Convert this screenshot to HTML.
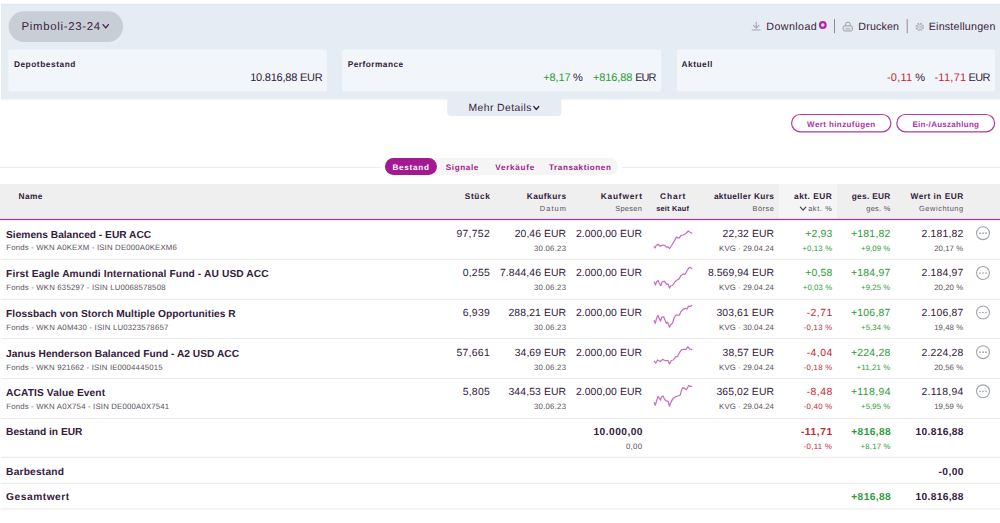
<!DOCTYPE html>
<html lang="de"><head><meta charset="utf-8"><title>Depot</title>
<style>
*{box-sizing:border-box;margin:0;padding:0}
html,body{width:1000px;height:523px;overflow:hidden;background:#fff}
body{font-family:"Liberation Sans",sans-serif;color:#33203c;position:relative}
.abs{position:absolute}
.t{position:absolute;white-space:pre;line-height:1.117;text-rendering:geometricPrecision}
#tabline{left:0;top:167px;width:1000px;height:1px;background:#ededed}
#tabs{left:381px;top:158px;width:241px;height:17px;background:#fff}
#tabs i{position:absolute;left:4px;top:0;width:233px;height:17px;background:#f5f5f5;border-radius:9px}
#tabs b{position:absolute;left:4px;top:0;width:52px;height:17px;background:#a3198f;border-radius:9px}
#thead{left:0;top:184px;width:1000px;height:35px;background:#efefef}
#sorted{left:779px;top:184px;width:58px;height:35px;background:#f5f5f5}
svg{position:absolute;overflow:visible}
</style></head><body>
<svg width="1000" height="523" style="left:0;top:0" viewBox="0 0 1000 523">
<rect x="1" y="3.9" width="999" height="95.6" fill="#e6ecf3"/><rect x="1" y="3.9" width="999" height="0.5" fill="#dde3e9"/><rect x="1" y="99.5" width="999" height="1" fill="#f6f8fa"/>
<path d="M447.3 99 H561.3 V112.3 Q561.3 115.9 557.7 115.9 H450.9 Q447.3 115.9 447.3 112.3 Z" fill="#e6ecf3"/>
<rect x="8.6" y="11.3" width="114.5" height="30.6" rx="15.3" fill="#c8ced6"/>
<rect x="8.3" y="49.5" width="318.6" height="42" rx="2" fill="#f2f6fa"/>
<rect x="342.1" y="49.5" width="319.2" height="42" rx="2" fill="#f2f6fa"/>
<rect x="676.9" y="49.5" width="318.2" height="42" rx="2" fill="#f2f6fa"/>
<rect x="834" y="19" width="1" height="14.2" fill="#8f8c96"/>
<rect x="906.7" y="19" width="1" height="14.2" fill="#8f8c96"/>
</svg>
<div id="tabline" class="abs"></div>
<div id="tabs" class="abs"><i></i><b></b></div>
<div id="thead" class="abs"></div>
<div id="sorted" class="abs"></div>
<svg width="1000" height="523" style="left:0;top:0" viewBox="0 0 1000 523"><rect x="0" y="218.9" width="1000" height="1.2" fill="#b52fa4"/><rect x="1" y="258.8" width="999" height="1" fill="#e9e9e9"/><rect x="1" y="298.8" width="999" height="1" fill="#e9e9e9"/><rect x="1" y="338.0" width="999" height="1" fill="#e9e9e9"/><rect x="1" y="378.0" width="999" height="1" fill="#e9e9e9"/><rect x="1" y="418.0" width="999" height="1" fill="#e9e9e9"/><rect x="1" y="456.8" width="999" height="1" fill="#e9e9e9"/><rect x="1" y="482.8" width="999" height="1" fill="#e9e9e9"/><rect x="1" y="508.5" width="999" height="1" fill="#e9e9e9"/></svg>
<svg width="1000" height="523" style="left:0;top:0" viewBox="0 0 1000 523"><rect x="791.6" y="114.5" width="99.3" height="17.3" rx="8.65" fill="none" stroke="#b23aa3" stroke-width="1.2"/><rect x="896.8" y="114.5" width="97.8" height="17.3" rx="8.65" fill="none" stroke="#b23aa3" stroke-width="1.2"/></svg>
<svg width="1000" height="523" style="left:0;top:0" viewBox="0 0 1000 523">
<path d="M654.2 246.8 L655.0 247.9 L656.0 245.7 L658.0 244.2 L660.3 246.3 L662.6 245.0 L664.6 245.4 L666.4 247.2 L668.0 246.8 L669.5 248.5 L671.8 245.3 L674.1 241.4 L676.4 237.1 L679.0 238.1 L681.0 235.3 L683.3 235.0 L685.6 233.8 L688.2 231.0 L690.2 232.2 L691.7 233.0" fill="none" stroke="#c870c0" stroke-width="1.25" stroke-linejoin="round" stroke-linecap="round"/>
<path d="M654.2 282.0 L655.4 285.0 L656.5 282.0 L658.0 280.5 L659.5 283.5 L660.8 285.8 L662.1 282.0 L664.1 281.2 L665.7 282.8 L666.9 284.6 L668.0 284.0 L669.5 288.1 L670.7 285.8 L672.6 285.5 L674.8 282.0 L677.1 280.0 L679.0 278.9 L681.0 275.4 L683.3 273.9 L685.1 274.3 L687.1 270.5 L688.9 267.8 L690.5 267.4 L691.7 268.7" fill="none" stroke="#c870c0" stroke-width="1.25" stroke-linejoin="round" stroke-linecap="round"/>
<path d="M654.2 320.7 L655.3 323.3 L656.5 318.4 L658.0 315.3 L659.2 318.4 L660.6 321.1 L661.8 317.1 L663.7 316.8 L665.2 320.7 L666.4 323.3 L667.7 322.2 L669.5 327.2 L671.0 324.5 L672.6 323.0 L674.4 317.1 L676.4 315.0 L679.4 315.0 L681.0 311.5 L683.3 309.2 L685.6 308.4 L687.1 308.9 L688.6 306.1 L690.2 306.4 L691.7 305.4" fill="none" stroke="#c870c0" stroke-width="1.25" stroke-linejoin="round" stroke-linecap="round"/>
<path d="M654.2 361.2 L655.7 363.1 L657.6 360.0 L660.3 361.5 L662.6 359.4 L664.9 360.5 L668.0 360.5 L669.5 364.0 L671.3 360.5 L673.3 360.0 L675.6 356.9 L677.6 356.3 L679.9 352.0 L681.7 349.7 L684.0 349.3 L686.0 349.3 L687.9 346.7 L689.7 349.0 L691.7 349.7" fill="none" stroke="#c870c0" stroke-width="1.25" stroke-linejoin="round" stroke-linecap="round"/>
<path d="M654.2 402.6 L655.3 405.2 L656.5 401.3 L658.0 396.4 L659.5 398.3 L660.6 400.1 L661.5 396.7 L663.1 396.0 L664.1 398.3 L665.7 400.6 L668.0 401.3 L669.5 406.2 L671.0 402.1 L672.9 398.6 L675.6 396.7 L677.9 396.0 L680.2 395.2 L681.4 390.6 L682.8 387.6 L684.5 388.3 L686.3 389.8 L688.6 385.7 L690.2 386.3 L691.7 386.3" fill="none" stroke="#c870c0" stroke-width="1.25" stroke-linejoin="round" stroke-linecap="round"/>
<circle cx="983" cy="233.2" r="6.45" fill="none" stroke="#a1a5a9" stroke-width="1.1"/>
<circle cx="980" cy="233.2" r="0.85" fill="#a1a1a9"/>
<circle cx="983" cy="233.2" r="0.85" fill="#a1a1a9"/>
<circle cx="986" cy="233.2" r="0.85" fill="#a1a1a9"/>
<circle cx="983" cy="273.0" r="6.45" fill="none" stroke="#a1a5a9" stroke-width="1.1"/>
<circle cx="980" cy="273.0" r="0.85" fill="#a1a1a9"/>
<circle cx="983" cy="273.0" r="0.85" fill="#a1a1a9"/>
<circle cx="986" cy="273.0" r="0.85" fill="#a1a1a9"/>
<circle cx="983" cy="312.5" r="6.45" fill="none" stroke="#a1a5a9" stroke-width="1.1"/>
<circle cx="980" cy="312.5" r="0.85" fill="#a1a1a9"/>
<circle cx="983" cy="312.5" r="0.85" fill="#a1a1a9"/>
<circle cx="986" cy="312.5" r="0.85" fill="#a1a1a9"/>
<circle cx="983" cy="352.2" r="6.45" fill="none" stroke="#a1a5a9" stroke-width="1.1"/>
<circle cx="980" cy="352.2" r="0.85" fill="#a1a1a9"/>
<circle cx="983" cy="352.2" r="0.85" fill="#a1a1a9"/>
<circle cx="986" cy="352.2" r="0.85" fill="#a1a1a9"/>
<circle cx="983" cy="391.3" r="6.45" fill="none" stroke="#a1a5a9" stroke-width="1.1"/>
<circle cx="980" cy="391.3" r="0.85" fill="#a1a1a9"/>
<circle cx="983" cy="391.3" r="0.85" fill="#a1a1a9"/>
<circle cx="986" cy="391.3" r="0.85" fill="#a1a1a9"/>
<path d="M103 24.6 L105.7 27.8 L108.4 24.6" fill="none" stroke="#3b2340" stroke-width="1.3" stroke-linecap="round" stroke-linejoin="round"/>
<path d="M533.8 106.5 L536.3 109.5 L538.8 106.5" fill="none" stroke="#3b2340" stroke-width="1.3" stroke-linecap="round" stroke-linejoin="round"/>
<path d="M800.4 207.2 L803.0999999999999 210.2 L805.8 207.2" fill="none" stroke="#4a3d50" stroke-width="1.2" stroke-linecap="round" stroke-linejoin="round"/>
<path d="M756.2 22.2 V27.6 M753.5 25.4 L756.2 28.1 L759 25.4 M752.2 30 H760.4" fill="none" stroke="#a3a5ad" stroke-width="1.1" stroke-linecap="round" stroke-linejoin="round"/>
<circle cx="822.8" cy="25" r="3.9" fill="#b0279f"/><circle cx="822.8" cy="25" r="1.7" fill="#f3e6f3"/>
<path d="M845.2 26 L846.2 22.4 H849.6 L850.6 26" fill="none" stroke="#9a99a2" stroke-width="0.9" stroke-linejoin="round"/><rect x="843.2" y="25.8" width="9.2" height="5.2" rx="1.5" fill="#dfe3ea" stroke="#9a99a2" stroke-width="0.9"/><path d="M845.4 28.9 H850.2" stroke="#9a99a2" stroke-width="0.8"/>
<circle cx="919.7" cy="27" r="3.7" fill="none" stroke="#a9abb3" stroke-width="1.1" stroke-dasharray="1.7 1.2"/><circle cx="919.7" cy="27" r="2.7" fill="none" stroke="#a9abb3" stroke-width="0.8"/><circle cx="919.7" cy="27" r="1.1" fill="none" stroke="#a9abb3" stroke-width="0.7"/>
</svg>
<span class="t" style="left:21.43px;top:20.68px;font-size:11.4px;color:#3b2340;letter-spacing:0.697px">Pimboli-23-24</span>
<span class="t" style="left:766.26px;top:22.32px;font-size:10.7px;color:#3b2340;letter-spacing:0.420px">Download</span>
<span class="t" style="left:858.37px;top:22.32px;font-size:10.7px;color:#3b2340;letter-spacing:0.129px">Drucken</span>
<span class="t" style="left:928.76px;top:22.32px;font-size:10.7px;color:#3b2340;letter-spacing:0.207px">Einstellungen</span>
<span class="t" style="left:13.89px;top:59.59px;font-size:8.3px;font-weight:bold;color:#33203c;letter-spacing:0.564px">Depotbestand</span>
<span class="t" style="left:347.78px;top:59.59px;font-size:8.3px;font-weight:bold;color:#33203c;letter-spacing:0.470px">Performance</span>
<span class="t" style="left:681.59px;top:59.59px;font-size:8.3px;font-weight:bold;color:#33203c;letter-spacing:0.510px">Aktuell</span>
<span class="t" style="left:250.15px;top:71.64px;font-size:11px;color:#33203c;letter-spacing:-0.218px">10.816,88 EUR</span>
<span class="t" style="left:543.15px;top:71.64px;font-size:11px;color:#2c9c38;letter-spacing:-0.061px">+8,17</span>
<span class="t" style="left:573.05px;top:71.64px;font-size:11px;color:#33203c;letter-spacing:0.419px">%</span>
<span class="t" style="left:593.05px;top:71.64px;font-size:11px;color:#2c9c38;letter-spacing:-0.130px">+816,88</span>
<span class="t" style="left:635.15px;top:71.64px;font-size:11px;color:#33203c;letter-spacing:-0.917px">EUR</span>
<span class="t" style="left:886.95px;top:71.64px;font-size:11px;color:#c62733;letter-spacing:0.234px">-0,11</span>
<span class="t" style="left:915.25px;top:71.64px;font-size:11px;color:#33203c;letter-spacing:-0.081px">%</span>
<span class="t" style="left:934.45px;top:71.64px;font-size:11px;color:#c62733;letter-spacing:0.265px">-11,71</span>
<span class="t" style="left:968.45px;top:71.64px;font-size:11px;color:#33203c;letter-spacing:-0.567px">EUR</span>
<span class="t" style="left:468.48px;top:103.19px;font-size:10.4px;color:#3b2340;letter-spacing:0.419px">Mehr Details</span>
<span class="t" style="left:807.10px;top:121.16px;font-size:8px;font-weight:bold;color:#ab35a0;letter-spacing:0.399px">Wert hinzufügen</span>
<span class="t" style="left:912.40px;top:121.16px;font-size:8px;font-weight:bold;color:#ab35a0;letter-spacing:0.281px">Ein-/Auszahlung</span>
<span class="t" style="left:392.50px;top:162.87px;font-size:8.1px;font-weight:bold;color:#fff;letter-spacing:0.745px">Bestand</span>
<span class="t" style="left:445.80px;top:162.87px;font-size:8.1px;font-weight:bold;color:#a3198f;letter-spacing:0.619px">Signale</span>
<span class="t" style="left:495.20px;top:162.87px;font-size:8.1px;font-weight:bold;color:#a3198f;letter-spacing:0.751px">Verkäufe</span>
<span class="t" style="left:549.00px;top:162.87px;font-size:8.1px;font-weight:bold;color:#a3198f;letter-spacing:0.586px">Transaktionen</span>
<span class="t" style="left:18.59px;top:191.69px;font-size:8.3px;font-weight:bold;color:#33203c;letter-spacing:0.407px">Name</span>
<span class="t" style="left:464.78px;top:191.69px;font-size:8.3px;font-weight:bold;color:#33203c;letter-spacing:0.609px">Stück</span>
<span class="t" style="left:526.69px;top:191.69px;font-size:8.3px;font-weight:bold;color:#33203c;letter-spacing:0.480px">Kaufkurs</span>
<span class="t" style="left:539.73px;top:204.50px;font-size:7.4px;color:#5a5260;letter-spacing:1.115px">Datum</span>
<span class="t" style="left:600.79px;top:191.69px;font-size:8.3px;font-weight:bold;color:#33203c;letter-spacing:0.804px">Kaufwert</span>
<span class="t" style="left:615.13px;top:204.50px;font-size:7.4px;color:#5a5260;letter-spacing:0.332px">Spesen</span>
<span class="t" style="left:660.09px;top:191.69px;font-size:8.3px;font-weight:bold;color:#33203c;letter-spacing:0.890px">Chart</span>
<span class="t" style="left:656.13px;top:204.50px;font-size:7.4px;font-weight:bold;color:#33203c;letter-spacing:0.215px">seit Kauf</span>
<span class="t" style="left:713.88px;top:191.69px;font-size:8.3px;font-weight:bold;color:#33203c;letter-spacing:0.360px">aktueller Kurs</span>
<span class="t" style="left:752.43px;top:204.50px;font-size:7.4px;color:#5a5260;letter-spacing:0.532px">Börse</span>
<span class="t" style="left:793.99px;top:191.69px;font-size:8.3px;font-weight:bold;color:#33203c;letter-spacing:0.529px">akt. EUR</span>
<span class="t" style="left:808.13px;top:204.50px;font-size:7.4px;color:#5a5260;letter-spacing:0.619px">akt. %</span>
<span class="t" style="left:851.69px;top:191.69px;font-size:8.3px;font-weight:bold;color:#33203c;letter-spacing:0.313px">ges. EUR</span>
<span class="t" style="left:866.33px;top:204.50px;font-size:7.4px;color:#5a5260;letter-spacing:0.266px">ges. %</span>
<span class="t" style="left:910.59px;top:191.69px;font-size:8.3px;font-weight:bold;color:#33203c;letter-spacing:0.483px">Wert in EUR</span>
<span class="t" style="left:919.03px;top:204.50px;font-size:7.4px;color:#5a5260;letter-spacing:0.568px">Gewichtung</span>
<span class="t" style="left:6.09px;top:230.07px;font-size:10.2px;font-weight:bold;color:#33203c;letter-spacing:-0.004px">Siemens Balanced - EUR ACC</span>
<span class="t" style="left:6.21px;top:244.44px;font-size:7.8px;color:#5a5260;letter-spacing:0.172px">Fonds - WKN A0KEXM - ISIN DE000A0KEXM6</span>
<span class="t" style="left:456.38px;top:228.59px;font-size:10.4px;color:#33203c;letter-spacing:0.312px">97,752</span>
<span class="t" style="left:514.68px;top:228.59px;font-size:10.4px;color:#33203c;letter-spacing:0.076px">20,46 EUR</span>
<span class="t" style="left:534.01px;top:245.14px;font-size:7.8px;color:#5a5260;letter-spacing:0.232px">30.06.23</span>
<span class="t" style="left:575.98px;top:228.59px;font-size:10.4px;color:#33203c;letter-spacing:0.069px">2.000,00 EUR</span>
<span class="t" style="left:722.58px;top:228.59px;font-size:10.4px;color:#33203c;letter-spacing:0.076px">22,32 EUR</span>
<span class="t" style="left:719.11px;top:245.14px;font-size:7.8px;color:#5a5260;letter-spacing:0.079px">KVG · 29.04.24</span>
<span class="t" style="left:805.18px;top:228.59px;font-size:10.4px;color:#2c9c38;letter-spacing:0.186px">+2,93</span>
<span class="t" style="left:802.31px;top:245.14px;font-size:7.8px;color:#2c9c38;letter-spacing:0.159px">+0,13 %</span>
<span class="t" style="left:850.88px;top:228.59px;font-size:10.4px;color:#2c9c38;letter-spacing:0.280px">+181,82</span>
<span class="t" style="left:861.11px;top:245.14px;font-size:7.8px;color:#2c9c38;letter-spacing:0.059px">+9,09 %</span>
<span class="t" style="left:921.48px;top:228.59px;font-size:10.4px;color:#33203c;letter-spacing:0.198px">2.181,82</span>
<span class="t" style="left:934.21px;top:245.14px;font-size:7.8px;color:#5a5260;letter-spacing:0.059px">20,17 %</span>
<span class="t" style="left:6.09px;top:269.07px;font-size:10.2px;font-weight:bold;color:#33203c;letter-spacing:0.127px">First Eagle Amundi International Fund - AU USD ACC</span>
<span class="t" style="left:6.21px;top:283.74px;font-size:7.8px;color:#5a5260;letter-spacing:0.182px">Fonds - WKN 635297 - ISIN LU0068578508</span>
<span class="t" style="left:462.68px;top:267.59px;font-size:10.4px;color:#33203c;letter-spacing:0.256px">0,255</span>
<span class="t" style="left:499.98px;top:267.59px;font-size:10.4px;color:#33203c;letter-spacing:0.078px">7.844,46 EUR</span>
<span class="t" style="left:534.01px;top:284.44px;font-size:7.8px;color:#5a5260;letter-spacing:0.232px">30.06.23</span>
<span class="t" style="left:575.98px;top:267.59px;font-size:10.4px;color:#33203c;letter-spacing:0.069px">2.000,00 EUR</span>
<span class="t" style="left:707.88px;top:267.59px;font-size:10.4px;color:#33203c;letter-spacing:0.078px">8.569,94 EUR</span>
<span class="t" style="left:719.11px;top:284.44px;font-size:7.8px;color:#5a5260;letter-spacing:0.079px">KVG · 29.04.24</span>
<span class="t" style="left:805.18px;top:267.59px;font-size:10.4px;color:#2c9c38;letter-spacing:0.186px">+0,58</span>
<span class="t" style="left:802.81px;top:284.44px;font-size:7.8px;color:#2c9c38;letter-spacing:0.075px">+0,03 %</span>
<span class="t" style="left:850.88px;top:267.59px;font-size:10.4px;color:#2c9c38;letter-spacing:0.280px">+184,97</span>
<span class="t" style="left:861.11px;top:284.44px;font-size:7.8px;color:#2c9c38;letter-spacing:0.059px">+9,25 %</span>
<span class="t" style="left:921.48px;top:267.59px;font-size:10.4px;color:#33203c;letter-spacing:0.198px">2.184,97</span>
<span class="t" style="left:934.21px;top:284.44px;font-size:7.8px;color:#5a5260;letter-spacing:0.059px">20,20 %</span>
<span class="t" style="left:6.09px;top:309.27px;font-size:10.2px;font-weight:bold;color:#33203c;letter-spacing:0.047px">Flossbach von Storch Multiple Opportunities R</span>
<span class="t" style="left:6.21px;top:323.94px;font-size:7.8px;color:#5a5260;letter-spacing:0.187px">Fonds - WKN A0M430 - ISIN LU0323578657</span>
<span class="t" style="left:462.68px;top:307.79px;font-size:10.4px;color:#33203c;letter-spacing:0.256px">6,939</span>
<span class="t" style="left:508.48px;top:307.79px;font-size:10.4px;color:#33203c;letter-spacing:0.115px">288,21 EUR</span>
<span class="t" style="left:534.01px;top:323.64px;font-size:7.8px;color:#5a5260;letter-spacing:0.232px">30.06.23</span>
<span class="t" style="left:575.98px;top:307.79px;font-size:10.4px;color:#33203c;letter-spacing:0.069px">2.000,00 EUR</span>
<span class="t" style="left:716.38px;top:307.79px;font-size:10.4px;color:#33203c;letter-spacing:0.115px">303,61 EUR</span>
<span class="t" style="left:719.11px;top:323.64px;font-size:7.8px;color:#5a5260;letter-spacing:0.079px">KVG · 30.04.24</span>
<span class="t" style="left:806.68px;top:307.79px;font-size:10.4px;color:#c62733;letter-spacing:0.463px">-2,71</span>
<span class="t" style="left:803.71px;top:323.64px;font-size:7.8px;color:#c62733;letter-spacing:0.251px">-0,13 %</span>
<span class="t" style="left:850.88px;top:307.79px;font-size:10.4px;color:#2c9c38;letter-spacing:0.280px">+106,87</span>
<span class="t" style="left:861.11px;top:323.64px;font-size:7.8px;color:#2c9c38;letter-spacing:0.059px">+5,34 %</span>
<span class="t" style="left:921.48px;top:307.79px;font-size:10.4px;color:#33203c;letter-spacing:0.198px">2.106,87</span>
<span class="t" style="left:934.21px;top:323.64px;font-size:7.8px;color:#5a5260;letter-spacing:0.059px">19,48 %</span>
<span class="t" style="left:6.09px;top:349.37px;font-size:10.2px;font-weight:bold;color:#33203c;letter-spacing:0.025px">Janus Henderson Balanced Fund - A2 USD ACC</span>
<span class="t" style="left:6.21px;top:363.94px;font-size:7.8px;color:#5a5260;letter-spacing:0.171px">Fonds - WKN 921662 - ISIN IE0004445015</span>
<span class="t" style="left:456.38px;top:347.89px;font-size:10.4px;color:#33203c;letter-spacing:0.312px">57,661</span>
<span class="t" style="left:514.68px;top:347.89px;font-size:10.4px;color:#33203c;letter-spacing:0.076px">34,69 EUR</span>
<span class="t" style="left:534.01px;top:363.64px;font-size:7.8px;color:#5a5260;letter-spacing:0.232px">30.06.23</span>
<span class="t" style="left:575.98px;top:347.89px;font-size:10.4px;color:#33203c;letter-spacing:0.069px">2.000,00 EUR</span>
<span class="t" style="left:722.58px;top:347.89px;font-size:10.4px;color:#33203c;letter-spacing:0.076px">38,57 EUR</span>
<span class="t" style="left:719.11px;top:363.64px;font-size:7.8px;color:#5a5260;letter-spacing:0.079px">KVG · 29.04.24</span>
<span class="t" style="left:806.68px;top:347.89px;font-size:10.4px;color:#c62733;letter-spacing:0.463px">-4,04</span>
<span class="t" style="left:803.71px;top:363.64px;font-size:7.8px;color:#c62733;letter-spacing:0.251px">-0,18 %</span>
<span class="t" style="left:850.88px;top:347.89px;font-size:10.4px;color:#2c9c38;letter-spacing:0.280px">+224,28</span>
<span class="t" style="left:856.51px;top:363.64px;font-size:7.8px;color:#2c9c38;letter-spacing:0.169px">+11,21 %</span>
<span class="t" style="left:921.48px;top:347.89px;font-size:10.4px;color:#33203c;letter-spacing:0.198px">2.224,28</span>
<span class="t" style="left:934.21px;top:363.64px;font-size:7.8px;color:#5a5260;letter-spacing:0.059px">20,56 %</span>
<span class="t" style="left:6.09px;top:388.07px;font-size:10.2px;font-weight:bold;color:#33203c;letter-spacing:0.108px">ACATIS Value Event</span>
<span class="t" style="left:6.21px;top:402.74px;font-size:7.8px;color:#5a5260;letter-spacing:0.176px">Fonds - WKN A0X754 - ISIN DE000A0X7541</span>
<span class="t" style="left:462.68px;top:386.59px;font-size:10.4px;color:#33203c;letter-spacing:0.256px">5,805</span>
<span class="t" style="left:508.48px;top:386.59px;font-size:10.4px;color:#33203c;letter-spacing:0.115px">344,53 EUR</span>
<span class="t" style="left:534.01px;top:403.44px;font-size:7.8px;color:#5a5260;letter-spacing:0.232px">30.06.23</span>
<span class="t" style="left:575.98px;top:386.59px;font-size:10.4px;color:#33203c;letter-spacing:0.069px">2.000,00 EUR</span>
<span class="t" style="left:716.38px;top:386.59px;font-size:10.4px;color:#33203c;letter-spacing:0.115px">365,02 EUR</span>
<span class="t" style="left:719.11px;top:403.44px;font-size:7.8px;color:#5a5260;letter-spacing:0.079px">KVG · 29.04.24</span>
<span class="t" style="left:806.68px;top:386.59px;font-size:10.4px;color:#c62733;letter-spacing:0.463px">-8,48</span>
<span class="t" style="left:803.71px;top:403.44px;font-size:7.8px;color:#c62733;letter-spacing:0.251px">-0,40 %</span>
<span class="t" style="left:850.88px;top:386.59px;font-size:10.4px;color:#2c9c38;letter-spacing:0.410px">+118,94</span>
<span class="t" style="left:861.11px;top:403.44px;font-size:7.8px;color:#2c9c38;letter-spacing:0.059px">+5,95 %</span>
<span class="t" style="left:921.48px;top:386.59px;font-size:10.4px;color:#33203c;letter-spacing:0.307px">2.118,94</span>
<span class="t" style="left:934.21px;top:403.44px;font-size:7.8px;color:#5a5260;letter-spacing:0.059px">19,59 %</span>
<span class="t" style="left:6.09px;top:427.27px;font-size:10.2px;font-weight:bold;color:#33203c;letter-spacing:-0.008px">Bestand in EUR</span>
<span class="t" style="left:593.49px;top:427.17px;font-size:10.2px;font-weight:bold;color:#33203c;letter-spacing:0.461px">10.000,00</span>
<span class="t" style="left:626.01px;top:442.54px;font-size:7.8px;color:#5a5260;letter-spacing:0.264px">0,00</span>
<span class="t" style="left:800.89px;top:427.17px;font-size:10.2px;font-weight:bold;color:#c62733;letter-spacing:0.578px">-11,71</span>
<span class="t" style="left:803.61px;top:442.54px;font-size:7.8px;color:#c62733;letter-spacing:0.347px">-0,11 %</span>
<span class="t" style="left:851.29px;top:427.17px;font-size:10.2px;font-weight:bold;color:#2c9c38;letter-spacing:0.385px">+816,88</span>
<span class="t" style="left:860.61px;top:442.54px;font-size:7.8px;color:#2c9c38;letter-spacing:0.159px">+8,17 %</span>
<span class="t" style="left:915.49px;top:427.17px;font-size:10.2px;font-weight:bold;color:#33203c;letter-spacing:0.336px">10.816,88</span>
<span class="t" style="left:6.09px;top:467.17px;font-size:10.2px;font-weight:bold;color:#33203c;letter-spacing:0.208px">Barbestand</span>
<span class="t" style="left:938.49px;top:467.17px;font-size:10.2px;font-weight:bold;color:#33203c;letter-spacing:0.446px">-0,00</span>
<span class="t" style="left:6.09px;top:491.77px;font-size:10.2px;font-weight:bold;color:#33203c;letter-spacing:0.532px">Gesamtwert</span>
<span class="t" style="left:851.29px;top:491.77px;font-size:10.2px;font-weight:bold;color:#2c9c38;letter-spacing:0.385px">+816,88</span>
<span class="t" style="left:915.49px;top:491.77px;font-size:10.2px;font-weight:bold;color:#33203c;letter-spacing:0.336px">10.816,88</span>
</body></html>
